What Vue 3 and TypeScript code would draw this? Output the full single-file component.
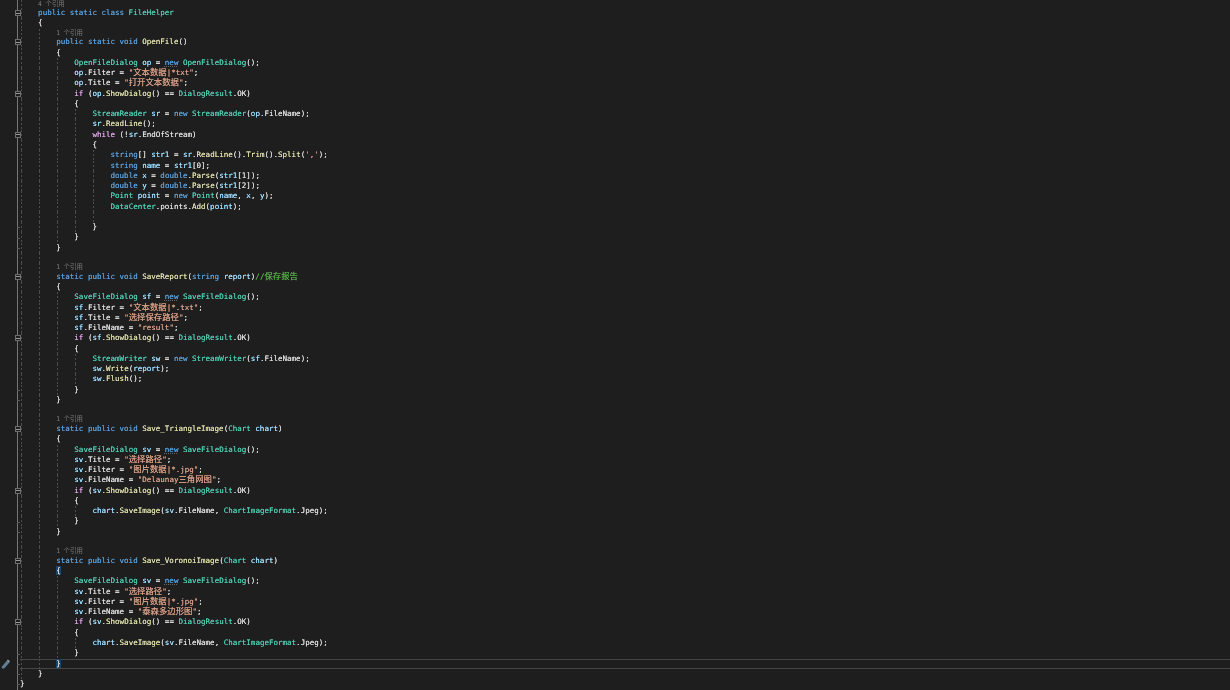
<script setup lang="ts">
interface Token { kind: string; text: string }
interface Row {
  indent: number
  lens?: string
  tokens: Token[]
  fold?: boolean
  end?: boolean
  current?: boolean
}

function parse(source: string): Token[] {
  const out: Token[] = []
  for (const part of source.split('~')) {
    const at = part.indexOf(':')
    const kind = part.slice(0, at)
    const text = part.slice(at + 1)
    for (const piece of text.split(/([\u4e00-\u9fff]+)/)) {
      if (!piece) continue
      out.push({ kind: /[\u4e00-\u9fff]/.test(piece) ? `${kind} cjk` : kind, text: piece })
    }
  }
  return out
}

const c = (indent: number, source: string, extra: Partial<Row> = {}): Row => ({ indent, tokens: parse(source), ...extra })
const lens = (indent: number, n: string): Row => ({ indent, lens: n, tokens: [] })
const blank = (indent: number, extra: Partial<Row> = {}): Row => ({ indent, tokens: [], ...extra })
const F = { fold: true }
const E = { end: true }

const rows: Row[] = [
  lens(1, '4'),
  c(1, 'k:public static class ~t:FileHelper', F),
  c(1, 'p:{'),
  lens(2, '1'),
  c(2, 'k:public static void ~m:OpenFile~p:()', F),
  c(2, 'p:{'),
  c(3, 't:OpenFileDialog ~v:op ~p:= ~n:new~p: ~t:OpenFileDialog~p:();'),
  c(3, 'v:op~p:.Filter = ~s:"文本数据|*txt"~p:;'),
  c(3, 'v:op~p:.Title = ~s:"打开文本数据"~p:;'),
  c(3, 'c:if ~p:(~v:op~p:.~m:ShowDialog~p:() == ~t:DialogResult~p:.OK)', F),
  c(3, 'p:{'),
  c(4, 't:StreamReader ~v:sr ~p:= ~k:new ~t:StreamReader~p:(~v:op~p:.FileName);'),
  c(4, 'v:sr~p:.~m:ReadLine~p:();'),
  c(4, 'c:while ~p:(!~v:sr~p:.EndOfStream)', F),
  c(4, 'p:{'),
  c(5, "k:string~p:[] ~v:str1 ~p:= ~v:sr~p:.~m:ReadLine~p:().~m:Trim~p:().~m:Split~p:(~s:','~p:);"),
  c(5, 'k:string ~v:name ~p:= ~v:str1~p:[0];'),
  c(5, 'k:double ~v:x ~p:= ~k:double~p:.~m:Parse~p:(~v:str1~p:[1]);'),
  c(5, 'k:double ~v:y ~p:= ~k:double~p:.~m:Parse~p:(~v:str1~p:[2]);'),
  c(5, 't:Point ~v:point ~p:= ~k:new ~t:Point~p:(~v:name~p:, ~v:x~p:, ~v:y~p:);'),
  c(5, 't:DataCenter~p:.points.~m:Add~p:(~v:point~p:);'),
  blank(5),
  c(4, 'p:}', E),
  c(3, 'p:}', E),
  c(2, 'p:}', E),
  blank(2),
  lens(2, '1'),
  c(2, 'k:static public void ~m:SaveReport~p:(~k:string ~v:report~p:)~g://保存报告', F),
  c(2, 'p:{'),
  c(3, 't:SaveFileDialog ~v:sf ~p:= ~n:new~p: ~t:SaveFileDialog~p:();'),
  c(3, 'v:sf~p:.Filter = ~s:"文本数据|*.txt"~p:;'),
  c(3, 'v:sf~p:.Title = ~s:"选择保存路径"~p:;'),
  c(3, 'v:sf~p:.FileName = ~s:"result"~p:;'),
  c(3, 'c:if ~p:(~v:sf~p:.~m:ShowDialog~p:() == ~t:DialogResult~p:.OK)', F),
  c(3, 'p:{'),
  c(4, 't:StreamWriter ~v:sw ~p:= ~k:new ~t:StreamWriter~p:(~v:sf~p:.FileName);'),
  c(4, 'v:sw~p:.~m:Write~p:(~v:report~p:);'),
  c(4, 'v:sw~p:.~m:Flush~p:();'),
  c(3, 'p:}', E),
  c(2, 'p:}', E),
  blank(2),
  lens(2, '1'),
  c(2, 'k:static public void ~m:Save_TriangleImage~p:(~t:Chart ~v:chart~p:)', F),
  c(2, 'p:{'),
  c(3, 't:SaveFileDialog ~v:sv ~p:= ~n:new~p: ~t:SaveFileDialog~p:();'),
  c(3, 'v:sv~p:.Title = ~s:"选择路径"~p:;'),
  c(3, 'v:sv~p:.Filter = ~s:"图片数据|*.jpg"~p:;'),
  c(3, 'v:sv~p:.FileName = ~s:"Delaunay三角网图"~p:;'),
  c(3, 'c:if ~p:(~v:sv~p:.~m:ShowDialog~p:() == ~t:DialogResult~p:.OK)', F),
  c(3, 'p:{'),
  c(4, 'v:chart~p:.~m:SaveImage~p:(~v:sv~p:.FileName, ~t:ChartImageFormat~p:.Jpeg);'),
  c(3, 'p:}', E),
  c(2, 'p:}', E),
  blank(2),
  lens(2, '1'),
  c(2, 'k:static public void ~m:Save_VoronoiImage~p:(~t:Chart ~v:chart~p:)', F),
  c(2, 'h:{'),
  c(3, 't:SaveFileDialog ~v:sv ~p:= ~n:new~p: ~t:SaveFileDialog~p:();'),
  c(3, 'v:sv~p:.Title = ~s:"选择路径"~p:;'),
  c(3, 'v:sv~p:.Filter = ~s:"图片数据|*.jpg"~p:;'),
  c(3, 'v:sv~p:.FileName = ~s:"泰森多边形图"~p:;'),
  c(3, 'c:if ~p:(~v:sv~p:.~m:ShowDialog~p:() == ~t:DialogResult~p:.OK)', F),
  c(3, 'p:{'),
  c(4, 'v:chart~p:.~m:SaveImage~p:(~v:sv~p:.FileName, ~t:ChartImageFormat~p:.Jpeg);'),
  c(3, 'p:}', E),
  c(2, 'h:}', { current: true, end: true }),
  c(1, 'p:}', E),
  c(0, 'p:}', E),
  blank(0),
]
</script>

<template>
  <main class="editor">
    <div
      v-for="(row, idx) in rows"
      :key="idx"
      class="row"
      :class="{ 'lens-row': row.lens, end: row.end, current: row.current }"
    >
      <div class="gutter">
        <svg v-if="row.current" class="pencil" width="9" height="10" viewBox="0 0 9 10">
          <path d="M0.6 8 L5.8 1.8 L8.4 3.6 L3.2 9.6 L1 9.6 Z" fill="#5f7f96" />
          <path d="M5.8 1.8 L6.8 0.6 L8.8 2 L8.4 3.6 Z" fill="#96a3ac" />
        </svg>
        <span v-if="row.fold" class="fold"></span>
      </div>
      <div class="code">
        <span v-for="n in row.indent" :key="n" class="guide"></span>
        <div class="text">
          <span v-if="row.lens" class="lens"><b>{{ row.lens }}</b>个引用</span>
          <span v-for="(tok, t) in row.tokens" :key="t" :class="tok.kind">{{ tok.text }}</span>
        </div>
      </div>
    </div>
  </main>
</template>

<style>
html, body {
  margin: 0;
  background: #1e1e1e;
  overflow: hidden;
}
</style>

<style scoped>
.editor {
  width: 1230px;
  height: 690px;
  margin-top: -0.4px;
  overflow: hidden;
  background: #1e1e1e;
  font-family: "DejaVu Sans Mono", "Liberation Mono", "Noto Sans CJK SC", monospace;
  font-size: 7.53px;
  filter: blur(0.3px);
}
.row {
  display: flex;
  height: 10.27px;
  line-height: 10.27px;
  white-space: pre;
}
.lens-row {
  height: 8.6px;
  line-height: 8.6px;
}
.gutter {
  position: relative;
  box-sizing: border-box;
  flex: 0 0 20px;
}
.gutter::before {
  content: "";
  position: absolute;
  left: 17px;
  top: 0;
  bottom: 0;
  width: 1px;
  background: #767676;
}
.end .gutter::after {
  content: "";
  position: absolute;
  left: 17px;
  bottom: 4px;
  width: 3px;
  height: 1px;
  background: #5a5a5a;
}
.fold {
  position: absolute;
  left: 15px;
  top: 2px;
  box-sizing: border-box;
  width: 6px;
  height: 6px;
  border: 1px solid #6e6e6e;
  background: #1e1e1e;
}
.fold::after {
  content: "";
  position: absolute;
  left: 0;
  right: 0;
  top: 1.5px;
  height: 1px;
  background: #9a9a9a;
}
.pencil {
  position: absolute;
  left: 1px;
  top: 0;
}
.code {
  flex: 1;
  display: flex;
  color: #dcdcdc;
  text-shadow: 0 0 0.3px currentColor;
}
.current .code {
  box-shadow: inset 0 1px 0 #464646, inset 0 -1px 0 #464646;
}
.text {
  flex: 1;
}
.guide {
  flex: 0 0 18.12px;
  background: repeating-linear-gradient(#4c4c4c 0 2px, transparent 2px 4px) 1px 0 / 1px 100% no-repeat;
}
.lens {
  font-family: "Noto Sans CJK SC", "Noto Sans", sans-serif;
  font-size: 6.4px;
  line-height: 0;
  color: #7b7b7b;
  text-shadow: none;
}
.lens b {
  display: inline-block;
  width: 7.4px;
  line-height: 0;
  font-weight: 400;
  font-family: "DejaVu Sans Mono", monospace;
  font-size: 6.4px;
}
.k { color: #569cd6; }
.n { color: #569cd6; text-decoration: underline dotted #666; }
.c { color: #d8a0df; }
.t { color: #4ec9b0; }
.m { color: #dcdcaa; }
.v { color: #9cdcfe; }
.s { color: #d69d85; }
.g { color: #57a64a; }
.p { color: #dcdcdc; }
.h { color: #dcdcdc; background: #17456e; }
.cjk {
  font-family: "Noto Sans CJK SC", sans-serif;
  font-size: 8.4px;
  line-height: 0;
}
</style>
